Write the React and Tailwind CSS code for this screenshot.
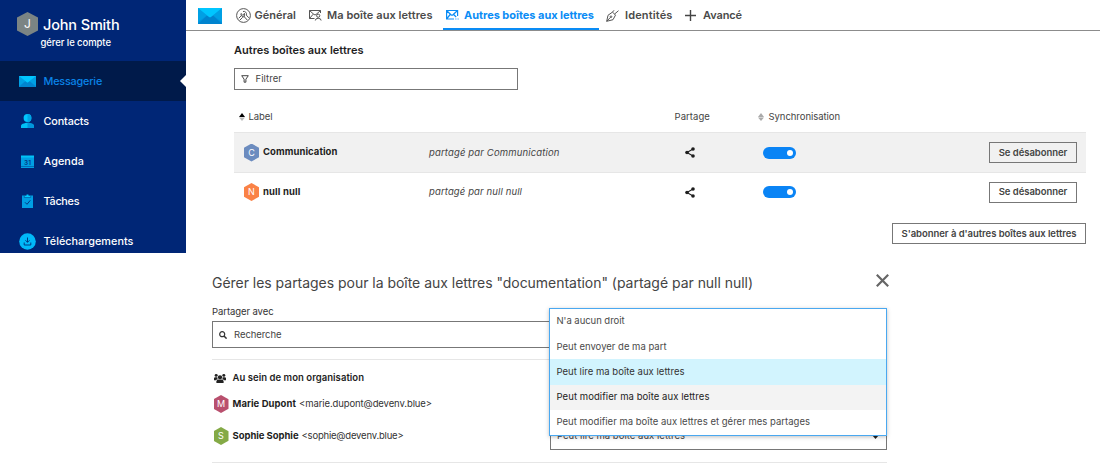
import React from "react";

function Hexagon({ letter, className, size }) {
  return (
    <span
      className={`flex shrink-0 items-center justify-center text-white [clip-path:polygon(50%_0,100%_23%,100%_77%,50%_100%,0_77%,0_23%)] ${size} ${className}`}
    >
      {letter}
    </span>
  );
}

function Envelope({ className }) {
  return (
    <svg className={className} viewBox="0 0 24 17" preserveAspectRatio="none">
      <rect width="24" height="17" fill="#0093dd" />
      <path d="M0 0v15L9 8zM24 0v15L15 8z" fill="#00a0e4" />
      <path d="M0 17l9-9h6l9 9z" fill="#0084cf" />
      <path d="M0 0h24L13 9.500q-1 .8-2 0z" fill="#00c6ff" />
    </svg>
  );
}

const PersonIcon = () => (
  <svg className="h-[14px] w-[13px]" viewBox="0 0 13 14">
    <path d="M0 14v-2q0-2 3-2.500l2-.7h3l2 .7q3 .5 3 2.500v2z" fill="#00c0f5" />
    <path d="M6.500 14V8.800H8l2 .7q3 .5 3 2.500v2z" fill="#0096dc" />
    <circle cx="6.500" cy="4" r="3.900" fill="#00c6ff" />
    <path d="M6.500.1a3.900 3.900 0 0 1 0 7.800z" fill="#00a5e5" />
  </svg>
);

const CalendarIcon = () => (
  <svg className="h-[13px] w-[13px]" viewBox="0 0 13 13">
    <rect y="1" width="13" height="12" fill="#009fe3" />
    <path d="M0 .5h13v2H0z" fill="#00c3f7" />
    <path d="M0 11.500h13" stroke="#003c8c" strokeWidth=".5" />
    <text x="6.500" y="9.500" textAnchor="middle" fontSize="6.500" fontWeight="600" fill="#003a84">31</text>
  </svg>
);

const TasksIcon = () => (
  <svg className="h-[14px] w-[11px]" viewBox="0 0 11 14">
    <rect y="1.500" width="11" height="12.500" fill="#009fe3" />
    <path d="M2.300 3.500V1.500h1.900a1.300 1.300 0 0 1 2.600 0h1.900v2z" fill="#00caff" stroke="#003a84" strokeWidth=".5" />
    <path d="M3 8.300l2 2 3.300-4" fill="none" stroke="#003a84" />
  </svg>
);

const DownloadIcon = () => (
  <svg className="h-[17px] w-[17px]" viewBox="0 0 17 17">
    <circle cx="8.500" cy="8.500" r="8.300" fill="#00b9f8" />
    <path d="M8.500 4.500v4.800M6.500 7.300l2 2 2-2M5.200 9.500v2.500h6.600V9.500" fill="none" stroke="#003a84" strokeWidth="1" />
  </svg>
);

const WrenchIcon = () => (
  <svg className="h-[15px] w-[15px]" viewBox="0 0 15 15" fill="none" stroke="#555" strokeWidth="1" strokeLinejoin="round">
    <circle cx="7.500" cy="7.500" r="6.900" />
    <path d="M7 3.500a2.700 2.700 0 0 1 3.300 3.600l2.500 2.700M8.300 8.800l3 3.300M8.300 8.800A2.700 2.700 0 0 1 5 5.500l1.700 1.600 1.400-.4.300-1.400z" />
    <path d="M5.200 7.800L2.700 10.300M6.700 9.300l-3 3" />
  </svg>
);

const MailboxUserIcon = () => (
  <svg className="h-[12px] w-[13px]" viewBox="0 0 13 12" fill="none" stroke="#555" strokeWidth="1">
    <path d="M5.500 9.500H.5v-8h11V4M.5 1.500L5 5.500q1 .8 2 0l4.500-4M.5 9.500l3.700-4.300" />
    <circle cx="9.200" cy="6.700" r="1.600" />
    <path d="M6.300 11.500q0-2.200 2.900-2.200t2.900 2.200" />
  </svg>
);

const MailboxShareIcon = () => (
  <svg className="h-[12px] w-[13px]" viewBox="0 0 13 12" fill="none" stroke="#0a8cf5" strokeWidth="1.200">
    <path d="M8 10H.6V1.500h11V7M.5 1.500L5 5.800q1 .8 2 0l4.500-4.300M.5 10l3.700-4.500M7.600 5.500l2.600 2.500" />
    <path d="M9.400 10h1M11.600 10h1" strokeWidth="1.200" />
  </svg>
);

const PenIcon = () => (
  <svg className="h-[13px] w-[13px]" viewBox="0 0 13 13" fill="none" stroke="#555" strokeWidth="1" strokeLinejoin="round">
    <path d="M.7 12.300L2 6.300l4.500-3.200 3 3L7 10.700z" />
    <path d="M.7 12.300l3.800-4M6.500 3.100L8 1.300M8.500 5.100l4-3.400" />
    <circle cx="5" cy="7.700" r=".8" />
  </svg>
);

const PlusIcon = () => (
  <svg className="h-[11px] w-[11px]" viewBox="0 0 11 11" stroke="#444" strokeWidth="1.400">
    <path d="M5.500 0v11M0 5.500h11" />
  </svg>
);

const FilterIcon = () => (
  <svg className="h-2 w-[8px]" viewBox="0 0 8 8" fill="none" stroke="#444" strokeWidth="1" strokeLinejoin="round">
    <path d="M.7.700h6.600L4.900 4.200v3H3.100v-3z" />
  </svg>
);

const SortIcon = ({ up, down }) => (
  <svg className="h-[8px] w-[6px]" viewBox="0 0 6 8">
    <path d="M0 4L3 0l3 4z" className={up} />
    <path d="M0 4.500L3 8l3-3.500z" className={down} />
  </svg>
);

const ShareIcon = () => (
  <svg className="h-[11px] w-[10px]" viewBox="0 0 10 11" fill="#1e1e1e">
    <path d="M8 2L2 5.500 8 9" fill="none" stroke="#1e1e1e" strokeWidth="1.100" />
    <circle cx="2" cy="5.500" r="1.800" />
    <circle cx="8" cy="2" r="1.800" />
    <circle cx="8" cy="9" r="1.800" />
  </svg>
);

const SearchIcon = () => (
  <svg className="h-2 w-2" viewBox="0 0 8 8" fill="none" stroke="#333" strokeWidth="1.200">
    <circle cx="3.200" cy="3.200" r="2.500" />
    <path d="M5 5l2.600 2.600" strokeWidth="1.500" />
  </svg>
);

const GroupIcon = () => (
  <svg className="h-[9px] w-[12px]" viewBox="0 0 11 9" fill="#222" preserveAspectRatio="none">
    <circle cx="5.500" cy="3.200" r="2" />
    <path d="M2.200 9V7.500q0-1.900 2-1.900h2.600q2 0 2 1.900V9z" />
    <circle cx="2" cy="1.400" r="1.400" />
    <circle cx="9" cy="1.400" r="1.400" />
    <path d="M0 5.500V4.300q0-1.100 1.200-1.100h1.600q0 1.200.9 2-1.500.200-1.900 1H0zM11 5.500V4.300q0-1.100-1.200-1.100H8.200q0 1.200-.9 2 1.500.200 1.900 1H11z" />
  </svg>
);

const CloseIcon = () => (
  <svg className="h-[13px] w-[13px]" viewBox="0 0 13 13" stroke="#666" strokeWidth="2.200">
    <path d="M.8.800l11.400 11.400M12.200.800L.8 12.200" />
  </svg>
);

const menu = [
  { label: "Messagerie", icon: <Envelope className="h-[11px] w-[17px]" />, track: "tracking-[-0.18px]", active: true },
  { label: "Contacts", icon: <PersonIcon />, track: "tracking-[-0.12px]" },
  { label: "Agenda", icon: <CalendarIcon />, track: "tracking-[0.08px]" },
  { label: "Tâches", icon: <TasksIcon />, track: "tracking-[-0.25px]" },
  { label: "Téléchargements", icon: <DownloadIcon />, track: "tracking-[0.04px]" },
];

function Sidebar() {
  return (
    <nav className="flex h-[252.5px] w-[186px] shrink-0 flex-col overflow-hidden bg-[#002676] text-white">
      <div className="h-[61px] shrink-0 pl-[17px] pt-3">
        <div className="flex h-6 items-center gap-[5px]">
          <Hexagon letter="J" size="h-6 w-[21px] text-[12px]" className="bg-[#7b8484]" />
          <span className="pt-px text-[14.5px] font-medium tracking-[-0.15px]">John Smith</span>
        </div>
        <div className="pl-[23.5px] text-[9.5px] font-medium leading-[13px] tracking-[-0.07px]">gérer le compte</div>
      </div>
      {menu.map((m) => (
        <div
          key={m.label}
          className={`flex h-10 shrink-0 items-center ${m.active ? "bg-[#001a4a] text-[#0a84e8]" : ""}`}
        >
          <span className="ml-[18px] flex w-[18px] justify-center">{m.icon}</span>
          <span className={`ml-[7.5px] pt-[2px] text-[10.800px] font-medium ${m.track}`}>{m.label}</span>
          {m.active && (
            <svg className="ml-auto h-3 w-[6px]" viewBox="0 0 6 12">
              <path d="M6 0v12L0 6z" fill="#fff" />
            </svg>
          )}
        </div>
      ))}
    </nav>
  );
}

function Tabs() {
  return (
    <div className="flex h-[31px] border-b border-[#8c8c8c] text-[11px] font-semibold text-[#4a4a4a]">
      <Envelope className="ml-3 mt-[8px] h-[16px] w-[24px]" />
      <div className="ml-[14px] flex w-[73px] items-center gap-[3.500px]">
        <WrenchIcon />
        <span>Général</span>
      </div>
      <div className="flex w-[134px] items-center gap-[5px]">
        <MailboxUserIcon />
        <span className="whitespace-nowrap tracking-[0.060px]">Ma boîte aux lettres</span>
      </div>
      <div className="flex h-[30px] w-[156px] items-center gap-[5px] border-b-2 border-[#0a8cf5] pl-[3px] pt-[2px] font-bold text-[#0a8cf5]">
        <MailboxShareIcon />
        <span className="whitespace-nowrap tracking-[-0.035px]">Autres boîtes aux lettres</span>
      </div>
      <div className="ml-[7px] flex w-[79px] items-center gap-[6px]">
        <PenIcon />
        <span className="tracking-[0.14px]">Identités</span>
      </div>
      <div className="flex items-center gap-[7px]">
        <PlusIcon />
        <span className="tracking-[-0.1px]">Avancé</span>
      </div>
    </div>
  );
}

function OutlineButton({ children, className }) {
  return (
    <button
      className={`flex h-[21px] items-center justify-center whitespace-nowrap border border-[#777] pt-px text-[9.5px] font-semibold tracking-[-0.048px] text-[#444] ${className}`}
    >
      {children}
    </button>
  );
}

function MailboxRow({ letter, color, name, nameTrack, shared, sharedTrack, className }) {
  return (
    <div className={`flex items-center ${className}`}>
      <div className="flex w-[195px] items-center gap-1 pl-[10px]">
        <Hexagon letter={letter} size="h-[18px] w-[15px] text-[9px]" className={color} />
        <span className={`text-[9.5px] font-bold text-[#1e1e1e] ${nameTrack}`}>{name}</span>
      </div>
      <span className={`w-[256px] pt-px text-[9.5px] italic text-[#444] ${sharedTrack}`}>{shared}</span>
      <span className="w-[78px]">
        <ShareIcon />
      </span>
      <span className="flex h-3 w-[33px] items-center justify-end rounded-full bg-[#0a84f5] pr-[3px]">
        <span className="h-[6px] w-[6px] rounded-full bg-white" />
      </span>
      <OutlineButton className="ml-auto mr-[9px] w-[88px]">Se désabonner</OutlineButton>
    </div>
  );
}

function Mailboxes() {
  return (
    <div className="flex flex-col pl-12 pr-[14px]">
      <h2 className="mt-3 text-[11px] font-semibold leading-[15px] tracking-[0.013px] text-[#1e1e1e]">
        Autres boîtes aux lettres
      </h2>
      <div className="mt-[10px] flex h-[22px] w-[284px] items-center gap-[7px] border border-[#777] pl-[5.5px] text-[9.5px] tracking-[0.07px] text-[#444]">
        <FilterIcon />
        <span>Filtrer</span>
      </div>
      <div className="mt-[7px] flex h-[35px] items-center pt-[5px] text-[9.5px] text-[#444]">
        <div className="flex w-[440.500px] items-center gap-[4px] pl-[4.5px]">
          <SortIcon up="fill-black" down="fill-[#bbb]" />
          <span className="pt-px tracking-[-0.075px]">Label</span>
        </div>
        <span className="w-[83.5px] pt-px tracking-[0.07px]">Partage</span>
        <div className="flex items-center gap-[4.5px]">
          <SortIcon up="fill-[#aaa]" down="fill-[#aaa]" />
          <span className="pt-px tracking-[-0.046px]">Synchronisation</span>
        </div>
      </div>
      <MailboxRow
        letter="C"
        color="bg-[#6c8cbf]"
        name="Communication"
        nameTrack="tracking-[0.07px]"
        shared="partagé par Communication"
        sharedTrack="tracking-[0.142px]"
        className="h-[41px] border-y border-[#e6e6e6] bg-[#f1f1f1]"
      />
      <MailboxRow
        letter="N"
        color="bg-[#fa8246]"
        name="null null"
        nameTrack="tracking-[0.142px]"
        shared="partagé par null null"
        sharedTrack="tracking-[0.121px]"
        className="h-[38px]"
      />
      <OutlineButton className="ml-auto mt-3 w-[194px]">S'abonner à d'autres boîtes aux lettres</OutlineButton>
    </div>
  );
}

const options = [
  { label: "N'a aucun droit", look: "tracking-[-0.043px] text-[#4a4a4a]" },
  { label: "Peut envoyer de ma part", look: "text-[#4a4a4a]" },
  { label: "Peut lire ma boîte aux lettres", look: "tracking-[0.028px] bg-[#d2f4fe] text-[#333]" },
  { label: "Peut modifier ma boîte aux lettres", look: "tracking-[0.068px] bg-[#f3f3f3] text-[#222]" },
  { label: "Peut modifier ma boîte aux lettres et gérer mes partages", look: "tracking-[0.016px] text-[#4a4a4a]" },
];

function Person({ letter, color, name, nameTrack, mail, mailTrack, className }) {
  return (
    <div className={`flex items-center pl-[1.5px] text-[9.5px] ${className}`}>
      <Hexagon letter={letter} size="h-[18px] w-[15px] text-[9px]" className={color} />
      <span className={`ml-1 font-bold text-[#1e1e1e] ${nameTrack}`}>{name}</span>
      <span className={`ml-[3px] text-[#333] ${mailTrack}`}>{mail}</span>
    </div>
  );
}

function SharingDialog() {
  return (
    <section className="ml-[212px] w-[675px]">
      <div className="flex justify-between pt-[19px]">
        <h1 className="whitespace-nowrap text-[14px] leading-[22px] tracking-[-0.028px] text-[#444]">
          Gérer les partages pour la boîte aux lettres "documentation" (partagé par null null)
        </h1>
        <button className="mr-[-2px] mt-[2px] self-start">
          <CloseIcon />
        </button>
      </div>
      <div className="mt-[11px] text-[9.500px] leading-[14px] tracking-[-0.081px] text-[#333]">Partager avec</div>
      <div className="relative mt-[2px]">
        <div className="flex h-[27px] w-[338px] items-center gap-[7px] border border-[#777] pl-[6px] text-[9.500px] tracking-[-0.068px] text-[#444]">
          <SearchIcon />
          <span className="pt-px">Recherche</span>
        </div>
        <div className="mt-[11px] flex h-[104px] flex-col border-y border-[#e6e6e6]">
          <div className="mt-[11px] flex h-[14px] items-center gap-[6.5px] pl-[2px] text-[9.500px] font-semibold tracking-[0.045px] text-[#1e1e1e]">
            <GroupIcon />
            <span className="pt-px">Au sein de mon organisation</span>
          </div>
          <Person
            letter="M"
            color="bg-[#b9506e]"
            name="Marie Dupont"
            nameTrack="tracking-[0.06px]"
            mail="<marie.dupont@devenv.blue>"
            mailTrack="tracking-[-0.102px]"
            className="mt-[10px] h-[18px]"
          />
          <div className="mt-[9px] flex h-7 shrink-0 items-center justify-between">
            <Person
              letter="S"
              color="bg-[#84aa46]"
              name="Sophie Sophie"
              nameTrack="tracking-[-0.048px]"
              mail="<sophie@devenv.blue>"
              mailTrack="tracking-[-0.2px]"
            />
            <div className="flex h-7 w-[337px] items-center justify-between border border-[#777] pl-[6px] pr-[7px] pt-px text-[9.500px] tracking-[0.028px] text-[#444]">
              <span>Peut lire ma boîte aux lettres</span>
              <svg className="h-[4px] w-[7px]" viewBox="0 0 7 4">
                <path d="M0 0h7L3.500 4z" fill="#222" />
              </svg>
            </div>
          </div>
        </div>
        <div className="absolute -top-[13px] left-[337px] flex h-[128px] w-[338px] flex-col border border-[#4aa8f0] bg-white shadow-[0_1px_4px_rgba(0,0,0,0.25)]">
          {options.map((o) => (
            <div key={o.label} className={`flex flex-1 items-center pl-[6.5px] text-[9.500px] ${o.look}`}>
              {o.label}
            </div>
          ))}
        </div>
      </div>
    </section>
  );
}

export default function App() {
  return (
    <div className="h-[473px] w-[1100px] overflow-hidden bg-white font-['Inter',sans-serif]">
      <div className="flex h-[253px]">
        <Sidebar />
        <main className="flex flex-1 flex-col">
          <Tabs />
          <Mailboxes />
        </main>
      </div>
      <SharingDialog />
    </div>
  );
}
